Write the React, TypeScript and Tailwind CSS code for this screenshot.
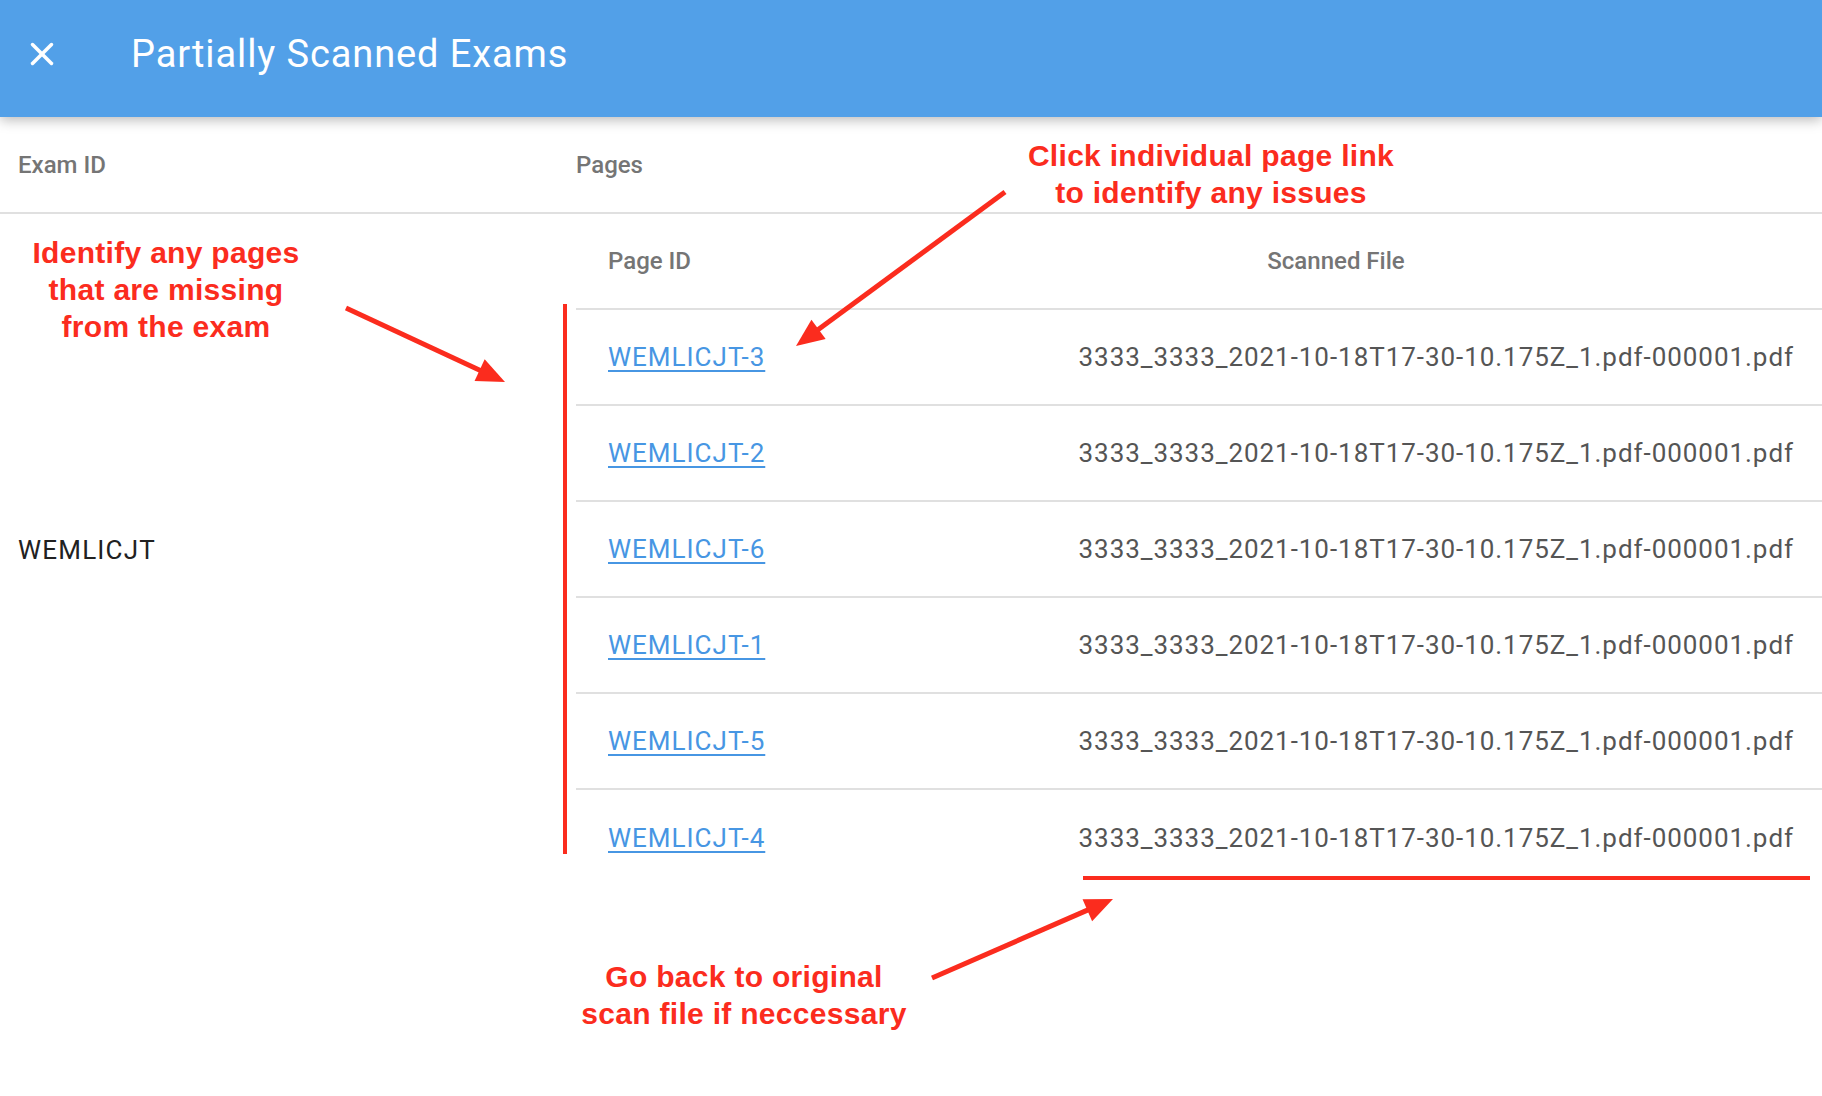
import { X } from "lucide-react";

const pages = [
  { id: "WEMLICJT-3", file: "3333_3333_2021-10-18T17-30-10.175Z_1.pdf-000001.pdf" },
  { id: "WEMLICJT-2", file: "3333_3333_2021-10-18T17-30-10.175Z_1.pdf-000001.pdf" },
  { id: "WEMLICJT-6", file: "3333_3333_2021-10-18T17-30-10.175Z_1.pdf-000001.pdf" },
  { id: "WEMLICJT-1", file: "3333_3333_2021-10-18T17-30-10.175Z_1.pdf-000001.pdf" },
  { id: "WEMLICJT-5", file: "3333_3333_2021-10-18T17-30-10.175Z_1.pdf-000001.pdf" },
  { id: "WEMLICJT-4", file: "3333_3333_2021-10-18T17-30-10.175Z_1.pdf-000001.pdf" },
];

// straight arrow with a filled head, tip at (x2, y2)
function Arrow({ x1, y1, x2, y2 }: { x1: number; y1: number; x2: number; y2: number }) {
  const dx = x2 - x1;
  const dy = y2 - y1;
  const len = Math.sqrt(dx * dx + dy * dy);
  const ux = dx / len;
  const uy = dy / len;
  const head = 28;
  const half = 12;
  const bx = x2 - ux * head;
  const by = y2 - uy * head;
  const pts = `${x2},${y2} ${bx - uy * half},${by + ux * half} ${bx + uy * half},${by - ux * half}`;
  return (
    <g>
      <line x1={x1} y1={y1} x2={bx + ux * 2} y2={by + uy * 2} stroke="#fb2c1e" strokeWidth={5} />
      <polygon points={pts} fill="#fb2c1e" />
    </g>
  );
}

function Note({ className, lines }: { className: string; lines: string[] }) {
  return (
    <div
      className={`absolute text-center font-['Liberation_Sans',Arial,sans-serif] font-bold text-[30px] leading-[37px] tracking-[0.3px] text-[#fb2c1e] ${className}`}
    >
      {lines.map((l) => (
        <div key={l}>{l}</div>
      ))}
    </div>
  );
}

export default function App() {
  return (
    <div className="relative w-[1822px] h-[1096px] overflow-hidden bg-white font-['Roboto',sans-serif]">
      <header className="relative z-10 h-[117px] bg-[#52a0e8] flex items-center pb-[9px] shadow-[0_3px_12px_rgba(0,0,0,0.28)]">
        <div className="w-[130px] flex justify-center pr-[46px]">
          <X className="text-white w-[38px] h-[38px]" strokeWidth={2.2} />
        </div>
        <h1 className="text-white text-[38px] tracking-[0.9px] pl-[1px]">Partially Scanned Exams</h1>
      </header>

      <div className="grid grid-cols-[576px_1fr]">
        <div className="h-[97px] flex items-center pl-[18px] border-b-2 border-[#e0e0e0] text-[24px] font-medium text-[#757575]">
          Exam ID
        </div>
        <div className="h-[97px] flex items-center border-b-2 border-[#e0e0e0] text-[24px] font-medium text-[#757575]">
          Pages
        </div>

        <div className="flex items-center pl-[18px] text-[26px] tracking-[1.2px] text-[#212121]">WEMLICJT</div>

        <div className="flex flex-col">
          <div className="h-[96px] grid grid-cols-[274px_1fr] border-b-2 border-[#e0e0e0] text-[24px] font-medium text-[#757575]">
            <div className="flex items-center pl-[32px]">Page ID</div>
            <div className="flex items-center justify-center">Scanned File</div>
          </div>
          {pages.map((p, i) => (
            <div
              key={p.id}
              className={`h-[96px] grid grid-cols-[274px_1fr] ${i < pages.length - 1 ? "border-b-2 border-[#e0e0e0]" : ""}`}
            >
              <div className="flex items-center pl-[32px]">
                <a href="#" className="text-[26px] tracking-[1px] text-[#4796e3] underline underline-offset-[4px] decoration-[2px]">
                  {p.id}
                </a>
              </div>
              <div className="flex items-center justify-end pr-[28px] text-[26px] tracking-[0.95px] text-[#555555]">
                {p.file}
              </div>
            </div>
          ))}
        </div>
      </div>

      {/* annotation layer */}
      <div className="absolute left-[563px] top-[304px] w-[4px] h-[550px] bg-[#fb2c1e]" />
      <div className="absolute left-[1083px] top-[876px] w-[727px] h-[4px] bg-[#fb2c1e]" />

      <svg className="absolute inset-0 pointer-events-none" width={1822} height={1096}>
        <Arrow x1={346} y1={308} x2={505} y2={382} />
        <Arrow x1={1005} y1={192} x2={796} y2={346} />
        <Arrow x1={932} y1={978} x2={1113} y2={899} />
      </svg>

      <Note className="left-[6px] top-[234px] w-[320px]" lines={["Identify any pages", "that are missing", "from the exam"]} />
      <Note className="left-[991px] top-[137px] w-[440px]" lines={["Click individual page link", "to identify any issues"]} />
      <Note className="left-[534px] top-[958px] w-[420px]" lines={["Go back to original", "scan file if neccessary"]} />
    </div>
  );
}
